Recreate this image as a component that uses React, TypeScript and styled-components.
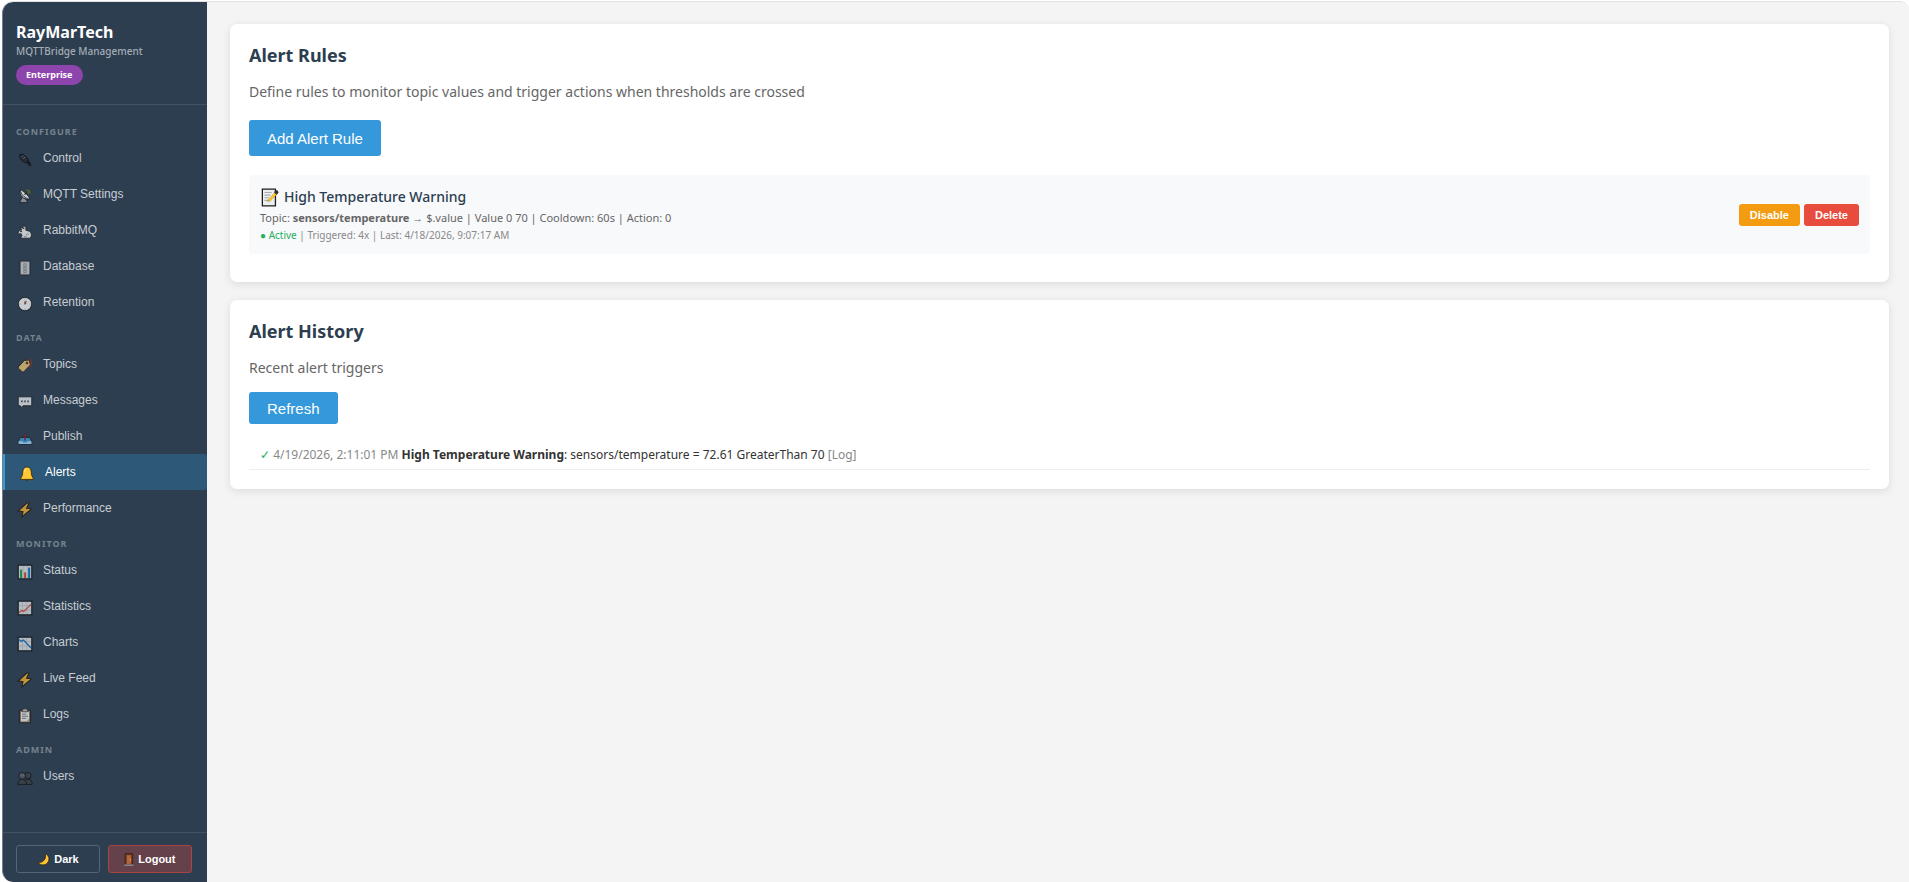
import React from 'react';
import styled, { createGlobalStyle, css } from 'styled-components';

const uiFont = '"Noto Sans", "Open Sans", sans-serif';
const controlFont = '"Liberation Sans", Arial, sans-serif';

const GlobalStyle = createGlobalStyle`
  *, *::before, *::after { box-sizing: border-box; }
  body { margin: 0; background: #fff; color: #333; font-family: ${uiFont}; }
  h1, h2, h3, p, ul { margin: 0; padding: 0; }
  ul { list-style: none; }
  button { font-family: ${controlFont}; cursor: pointer; }
`;

const Shell = styled.div`
  display: flex;
  min-height: calc(100vh - 1px);
  margin: 1px 0 0 2px;
  overflow: hidden;
  background: #f4f4f4;
  border-top: 1px solid #e2e2e2;
  border-radius: 11px 9px 0 11px;
`;

const Sidebar = styled.aside`
  display: flex;
  flex: none;
  flex-direction: column;
  width: 205px;
  background: #2c3e50;
  border-left: 1px solid #73808c;
  border-radius: 11px 0 0 11px;
`;

const Brand = styled.header`
  display: flex;
  flex-direction: column;
  align-items: flex-start;
  padding: 19px 13px 19px;
  border-bottom: 1px solid #435364;
`;

const BrandName = styled.h1`
  color: #fff;
  font-size: 16px;
  font-weight: 700;
  line-height: 22px;
`;

const BrandNote = styled.p`
  margin-top: 1px;
  color: #a5adb5;
  font-size: 10px;
  font-weight: 500;
  line-height: 14px;
`;

const Plan = styled.span`
  margin-top: 7px;
  padding: 0 10px;
  border-radius: 10px;
  background: #8e44ad;
  color: #fff;
  font-size: 9px;
  font-weight: 700;
  line-height: 20px;
`;

const Nav = styled.nav`
  flex: 1;
  padding-top: 9px;
`;

const GroupTitle = styled.h2`
  padding: 12px 13px 2px;
  color: #76828d;
  font-size: 9px;
  font-weight: 700;
  line-height: 12px;
  letter-spacing: 1px;
`;

const NavIcon = styled.svg`
  flex: none;
  width: 16px;
  height: 16px;
  margin-top: 4px;
`;

const NavButton = styled.button<{ $active: boolean }>`
  display: flex;
  align-items: center;
  gap: 10px;
  width: 100%;
  height: 36px;
  padding: 0 14px;
  border: 0;
  background: transparent;
  color: #c8cdd2;
  font-size: 12px;
  text-align: left;

  ${NavIcon} { opacity: 0.8; }

  ${({ $active }) => $active && css`
    border-left: 2px solid #3498db;
    border-radius: 0 3px 3px 0;
    background: #2e5878;
    color: #fff;
    ${NavIcon} { opacity: 1; }
  `}
`;

const SideActions = styled.footer`
  display: grid;
  grid-template-columns: 1fr 1fr;
  gap: 8px;
  padding: 12px 15px 9px 13px;
  border-top: 1px solid #435364;
`;

const SideButton = styled.button<{ $danger?: boolean }>`
  display: flex;
  align-items: center;
  justify-content: center;
  gap: 4px;
  height: 28px;
  padding: 0;
  border: 1px solid ${({ $danger }) => ($danger ? '#a94440' : '#566575')};
  border-radius: 3px;
  background: ${({ $danger }) => ($danger ? '#65414b' : 'transparent')};
  color: #fff;
  font-size: 11px;
  font-weight: 700;

  svg { height: 13px; }
`;

const Main = styled.main`
  display: flex;
  flex: 1;
  flex-direction: column;
  gap: 18px;
  min-width: 0;
  padding: 22px 20px 22px 23px;
`;

const Card = styled.section`
  padding: 19px;
  border-radius: 7px;
  background: #fff;
  box-shadow: 0 2px 9px rgba(0, 0, 0, 0.1);
`;

const CardTitle = styled.h2`
  color: #2c3e50;
  font-size: 18px;
  font-weight: 700;
  line-height: 25px;
`;

const CardText = styled.p`
  margin-top: 14px;
  color: #666;
  font-size: 14px;
  line-height: 20px;
`;

const PrimaryButton = styled.button<{ $compact?: boolean }>`
  display: block;
  height: ${({ $compact }) => ($compact ? 32 : 36)}px;
  margin-top: ${({ $compact }) => ($compact ? 14 : 18)}px;
  padding: 0 18px;
  border: 0;
  border-radius: 3px;
  background: #3498db;
  color: #fff;
  font-size: 15px;
`;

const Rule = styled.article`
  display: flex;
  align-items: center;
  justify-content: space-between;
  margin: 19px 0 9px;
  padding: 10px 11px;
  border-radius: 4px;
  background: #f8f9fb;
`;

const RuleName = styled.h3`
  display: flex;
  align-items: center;
  gap: 5px;
  color: #2c3e50;
  font-size: 14px;
  font-weight: 500;
  line-height: 24px;

  svg { width: 19px; height: 19px; }
`;

const RuleDetail = styled.p`
  color: #666;
  font-size: 11px;
  line-height: 18px;
`;

const RuleState = styled.p`
  color: #888;
  font-size: 10px;
  line-height: 17px;
`;

const Green = styled.span`
  color: #27ae60;
`;

const Muted = styled.span`
  color: #888;
`;

const RuleActions = styled.div`
  display: flex;
  gap: 4px;
`;

const SmallButton = styled.button<{ $tone: string }>`
  height: 22px;
  padding: 0 11px;
  border: 0;
  border-radius: 3px;
  background: ${({ $tone }) => $tone};
  color: #fff;
  font-size: 11px;
  font-weight: 700;
`;

const HistoryList = styled.ul`
  margin-top: 17px;
`;

const HistoryItem = styled.li`
  padding: 4px 11px 5px;
  border-bottom: 1px solid #eee;
  font-size: 12px;
  line-height: 19px;
`;

const icons: Record<string, React.ReactNode> = {
  plug: (
    <g>
      <path d="M2.2 3.6 4 1.8M5 6.2 7 4.2" stroke="#15191d" strokeWidth="1.4" />
      <path d="m2.4 5.2 3.4-3.4 4.8 4.4 1 3-2.2 1.9-3.2-1z" fill="#24282c" stroke="#111417" />
      <path d="M4.4 5.3 6 3.7M6.2 6.8 8 5" stroke="#7b8085" />
      <path d="M9.8 9.6c2.2.4 3 1.6 3.2 4.6" fill="none" stroke="#111417" strokeWidth="2.6" />
    </g>
  ),
  dish: (
    <g stroke="#14191e" strokeWidth=".8">
      <path d="m5.4 9-2.8 5.6h8.2L8.6 11z" fill="#9da3a8" />
      <path d="M3.4 2c-1.4 4.6 2.4 10 9.4 9.2z" fill="#e4e6e8" />
      <path d="M3.4 2c2.6.4 8.2 5.4 9.4 9.2-3.8-.2-9.6-5-9.4-9.2z" fill="#f2f3f4" />
      <path d="m7.6 6.6 3-3.2" strokeWidth="1.3" />
      <path d="M9.4 2.2c2.2-.6 4 1 3.6 3.4M9.6 4c1.2-.2 1.8.4 1.6 1.6" fill="none" stroke="#6f7a12" strokeWidth="1.2" />
    </g>
  ),
  rabbit: (
    <g stroke="#161a1e" strokeWidth=".8">
      <path d="M4.6 6.2C3 5.8 1.8 7 1.2 8.4c.2 1.4 1.8 1.6 3 1.4l.8 1.6-1.4 2.8h9.4l1-1.2c1.2-3-.4-6-3.4-6.2L8.8 6.2 9 3 6 1.4l1 3.2-3.6-1.4z" fill="#e9ebed" />
      <path d="m6.2 2.4 1.6 2.8" stroke="#d98f8f" />
      <path d="M9 11.4c.4-1.8 2.2-2 3-.8M6.8 12.6h3" fill="none" stroke="#7c8389" />
      <circle cx="4" cy="7.6" r=".5" fill="#111" />
    </g>
  ),
  cabinet: (
    <g>
      <path d="M3 1h10v14H3z" fill="#b7bbbe" stroke="#23282c" />
      <path d="M5 2.5v11M11 2.5v11" stroke="#d8dadc" />
      <path d="M6.8 4h2.4v2H6.8zM6.8 7.2h2.4v2H6.8zM6.8 10.4h2.4v2H6.8z" fill="#d8dadc" stroke="#777d83" strokeWidth=".7" />
    </g>
  ),
  clock: (
    <g>
      <circle cx="8" cy="8" r="6.8" fill="#eef0f1" stroke="#22272c" strokeWidth="1.1" />
      <path d="M8 2.6v1M8 12.4v1M2.6 8h1M12.4 8h1" stroke="#8b9299" strokeWidth=".8" />
      <path d="M7.8 8.6V5.4" stroke="#444" strokeWidth=".9" />
      <path d="m8.4 8 .8-3" stroke="#bf2c2c" strokeWidth="1.1" />
    </g>
  ),
  tag: (
    <g>
      <path d="M9.6 4.4c.6-3 4-3.6 4.6-1 .4 2-.4 4.6-2 6.2" fill="none" stroke="#a23324" strokeWidth="1.2" />
      <path d="M1.2 9 7.4 2.4l5-.4 1 5-6.6 6.8-1.4.2-4-3.8z" fill="#dfbf73" stroke="#2a241b" />
      <circle cx="10" cy="5" r="1.1" fill="#7a2a1c" stroke="#3b211b" strokeWidth=".6" />
    </g>
  ),
  speech: (
    <g>
      <path d="M1.2 2.8h13.6v9H6.2L3.4 14.2v-2.4H1.2z" fill="#dfe1e6" stroke="#20262c" />
      <path d="M4.2 6.6h1.4v1.6H4.2zM7.3 6.6h1.4v1.6H7.3zM10.4 6.6h1.4v1.6h-1.4z" fill="#2e3339" />
    </g>
  ),
  outbox: (
    <g>
      <path d="m3.4 7.4-2.2 4v3h13.6v-3l-2.2-4z" fill="#3b96cf" stroke="#1d252c" />
      <path d="M1.6 11.2h3.8l.8 1.4h3.6l.8-1.4h3.8v2.8H1.6z" fill="#a4d1ef" />
      <path d="M8 10.4V5" stroke="#7d2734" strokeWidth="1.6" />
      <path d="M5.8 6.4 8 3.6l2.2 2.8z" fill="#93283a" stroke="#3a2630" strokeWidth=".6" />
    </g>
  ),
  bell: (
    <g stroke="#2c210b" strokeWidth=".8">
      <path d="M6 13h4c-.2 2-3.800 2-4 0z" fill="#d48716" />
      <path d="M8 1C5.200 1 3.800 3 3.700 6.200 3.600 9 3 10.600 1.800 12v1.400h12.400V12c-1.200-1.400-1.800-3-1.900-5.800C12.200 3 10.800 1 8 1z" fill="#ffc634" />
      <path d="M5.600 6.200c.2-2 .8-3 2-3.400" fill="none" stroke="#ffe28a" strokeWidth="1.1" />
    </g>
  ),
  bolt: (
    <path d="M9.8 1 1.2 9l4.8.6L4.8 15l10-8.2-5.2-.6L12 1z" fill="#e3ac3c" stroke="#281f11" strokeWidth="1.1" />
  ),
  bars: (
    <g>
      <path d="M1.2 1.2h13.6v13.6H1.2z" fill="#d8dbde" stroke="#171c21" strokeWidth="1.2" />
      <path d="M6.2 2v12M10.4 2v12" stroke="#b3b8bc" strokeWidth=".6" />
      <path d="M4.1 5.6V14" stroke="#189c36" strokeWidth="2" />
      <path d="M8.1 8.4V14" stroke="#d24834" strokeWidth="2" />
      <path d="M12.1 3.6V14" stroke="#1472c0" strokeWidth="2" />
    </g>
  ),
  rising: (
    <g>
      <path d="M1.2 1.2h13.6v13.6H1.2z" fill="#d8dbde" stroke="#171c21" strokeWidth="1.2" />
      <path d="M5.4 2v12M9.8 2v12M2 5.6h12M2 10h12" stroke="#adb3b9" strokeWidth=".6" />
      <path d="m2 12.8 2.8-2.4 2 1 7.2-7" fill="none" stroke="#d64932" strokeWidth="1.2" />
    </g>
  ),
  falling: (
    <g>
      <path d="M1.2 1.2h13.6v13.6H1.2z" fill="#d8dbde" stroke="#171c21" strokeWidth="1.2" />
      <path d="M5.4 2v12M9.8 2v12M2 5.6h12M2 10h12" stroke="#adb3b9" strokeWidth=".6" />
      <path d="m2 3.6 2.2 1.8L6.6 4 14 12" fill="none" stroke="#1670bc" strokeWidth="1.3" />
    </g>
  ),
  clipboard: (
    <g>
      <path d="M2.4 2.2h11.2v12.6H2.4z" fill="#98755b" stroke="#1d2125" />
      <path d="M4 4h8v9.4H4z" fill="#e6e7e8" />
      <path d="M5.4 1.6 8 .8l2.6.8v2.2H5.4z" fill="#b8bcc0" stroke="#30363b" strokeWidth=".7" />
      <path d="M5 6.2h4.4M5 8.3h6M5 10.4h4" stroke="#60666c" strokeWidth=".8" />
      <path d="M9 13.4 12 11v2.4z" fill="#9da3a8" />
    </g>
  ),
  people: (
    <g fill="#3e4347" stroke="#101418" strokeWidth=".9">
      <path d="M7.6 14.4c.2-3 .8-5 3.6-5s3.8 2 4 5z" />
      <circle cx="11" cy="5.6" r="3.2" />
      <path d="M.8 14.4c.2-3 1.2-5 4.2-5s4.4 2 4.6 5z" />
      <circle cx="5.2" cy="5.8" r="3.4" fill="#555b60" />
      <path d="M3.8 5.4h.8M6 5.4h.8" stroke="#9a9fa3" />
    </g>
  ),
  moon: (
    <path d="M10.4 1c4.6 2.2 5.6 7.4 2.4 11.2-3 3.4-8.6 3.2-11.6-.6 2 .4 4 0 5.6-1C10 8.6 11.2 5.4 10.4 1z" fill="#ffc531" stroke="#352910" strokeWidth=".9" />
  ),
  door: (
    <g>
      <path d="M1.4.8h9.2v13.4H1.4z" fill="#7a4023" stroke="#2c1c14" />
      <path d="M3 2.4h6v11.4H3z" fill="#b5683c" stroke="#5b2d19" strokeWidth=".6" />
      <path d="M.4 15h11.2" stroke="#9a9ea2" strokeWidth="1.4" />
      <circle cx="8" cy="8.4" r=".7" fill="#ffc531" />
    </g>
  ),
  memo: (
    <g>
      <path d="M2 1h11v14H2z" fill="#eceeef" stroke="#1d1d1d" strokeWidth="1.1" />
      <path d="M3.8 3.8h6M3.8 6h5M3.8 8.2h4M3.8 10.4h5" stroke="#a6aaae" strokeWidth=".9" />
      <path d="m6.6 11.6.8-2.2 5.4-5.8 1.6 1.4-5.6 5.8z" fill="#ffc431" stroke="#b98215" strokeWidth=".4" />
      <path d="m12.2 3.6 1-1.2h1.6l.4 1.4-1.2 1.6z" fill="#333" stroke="#1d1d1d" strokeWidth=".6" />
    </g>
  ),
};

const groups = [
  {
    title: 'CONFIGURE',
    items: [
      ['plug', 'Control'],
      ['dish', 'MQTT Settings'],
      ['rabbit', 'RabbitMQ'],
      ['cabinet', 'Database'],
      ['clock', 'Retention'],
    ],
  },
  {
    title: 'DATA',
    items: [
      ['tag', 'Topics'],
      ['speech', 'Messages'],
      ['outbox', 'Publish'],
      ['bell', 'Alerts'],
      ['bolt', 'Performance'],
    ],
  },
  {
    title: 'MONITOR',
    items: [
      ['bars', 'Status'],
      ['rising', 'Statistics'],
      ['falling', 'Charts'],
      ['bolt', 'Live Feed'],
      ['clipboard', 'Logs'],
    ],
  },
  { title: 'ADMIN', items: [['people', 'Users']] },
];

export default function App() {
  return (
    <>
      <GlobalStyle />
      <Shell>
        <Sidebar>
          <Brand>
            <BrandName>RayMarTech</BrandName>
            <BrandNote>MQTTBridge Management</BrandNote>
            <Plan>Enterprise</Plan>
          </Brand>
          <Nav>
            {groups.map((group) => (
              <section key={group.title}>
                <GroupTitle>{group.title}</GroupTitle>
                {group.items.map(([icon, label]) => (
                  <NavButton key={label} type="button" $active={label === 'Alerts'}>
                    <NavIcon viewBox="0 0 16 16" aria-hidden="true">{icons[icon]}</NavIcon>
                    {label}
                  </NavButton>
                ))}
              </section>
            ))}
          </Nav>
          <SideActions>
            <SideButton type="button">
              <svg viewBox="0 0 16 16" aria-hidden="true">{icons.moon}</svg>
              Dark
            </SideButton>
            <SideButton type="button" $danger>
              <svg viewBox="0 0 12 16" aria-hidden="true">{icons.door}</svg>
              Logout
            </SideButton>
          </SideActions>
        </Sidebar>
        <Main>
          <Card>
            <CardTitle>Alert Rules</CardTitle>
            <CardText>Define rules to monitor topic values and trigger actions when thresholds are crossed</CardText>
            <PrimaryButton type="button">Add Alert Rule</PrimaryButton>
            <Rule>
              <div>
                <RuleName>
                  <svg viewBox="0 0 16 16" aria-hidden="true">{icons.memo}</svg>
                  High Temperature Warning
                </RuleName>
                <RuleDetail>
                  Topic: <strong>sensors/temperature</strong> → $.value | Value 0 70 | Cooldown: 60s | Action: 0
                </RuleDetail>
                <RuleState>
                  <Green>● Active</Green> | Triggered: 4x | Last: 4/18/2026, 9:07:17 AM
                </RuleState>
              </div>
              <RuleActions>
                <SmallButton type="button" $tone="#f39c12">Disable</SmallButton>
                <SmallButton type="button" $tone="#e74c3c">Delete</SmallButton>
              </RuleActions>
            </Rule>
          </Card>
          <Card>
            <CardTitle>Alert History</CardTitle>
            <CardText>Recent alert triggers</CardText>
            <PrimaryButton type="button" $compact>Refresh</PrimaryButton>
            <HistoryList>
              <HistoryItem>
                <Green>✓</Green> <Muted>4/19/2026, 2:11:01 PM</Muted> <strong>High Temperature Warning</strong>:
                {' '}sensors/temperature = 72.61 GreaterThan 70 <Muted>[Log]</Muted>
              </HistoryItem>
            </HistoryList>
          </Card>
        </Main>
      </Shell>
    </>
  );
}
